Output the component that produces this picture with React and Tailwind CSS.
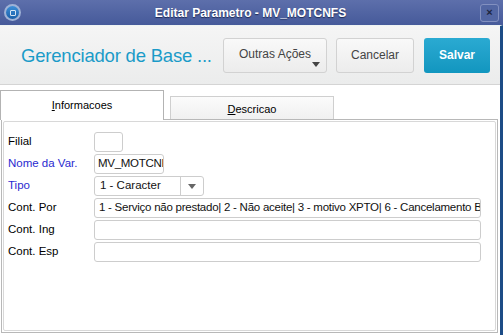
export default function App() {
  const rows = [
    { label: "Filial", blue: false, w: "w-[29px]", value: "" },
    { label: "Nome da Var.", blue: true, w: "w-[70px]", value: "MV_MOTCNF" },
  ];
  const longRows = [
    {
      label: "Cont. Por",
      value:
        "1 - Serviço não prestado| 2 - Não aceite| 3 - motivo XPTO| 6 - Cancelamento Ba",
    },
    { label: "Cont. Ing", value: "" },
    { label: "Cont. Esp", value: "" },
  ];

  return (
    <div className="w-[503px] h-[335px] flex flex-col bg-white overflow-hidden font-['Liberation_Sans',Arial,sans-serif]">
      {/* title bar */}
      <div className="h-[25px] shrink-0 flex items-center px-[4px] bg-gradient-to-b from-[#5d6fab] to-[#465a9a]">
        <div className="w-[17px] h-[17px] rounded-full bg-[#9fb2d6] p-[2px]">
          <div className="w-full h-full rounded-full bg-gradient-to-b from-[#3d8fd8] to-[#1a5fa8] flex items-center justify-center">
            <div className="w-[6px] h-[6px] border border-white/80 rounded-[1px]"></div>
          </div>
        </div>
        <div className="flex-1 text-center text-white font-bold text-[12px] [text-shadow:0_1px_1px_#1d2a55]">
          Editar Parametro - MV_MOTCNFS
        </div>
        <div className="w-[19px] h-[18px] border border-[#8290c0] rounded-[3px] bg-[#5266a3] flex items-center justify-center text-[#1c2540] text-[11px] font-bold leading-none">
          ×
        </div>
      </div>

      <div className="flex-1 flex flex-col border-r-[3px] border-[#1c4c86] border-t border-t-[#eef3f3]">
        {/* header */}
        <div className="h-[59px] shrink-0 flex items-center bg-gradient-to-b from-[#f5f5f5] to-[#ebecec] border-b border-[#d4d4d4] pl-[21px] pr-[10px]">
          <div className="flex-1 text-[18.5px] text-[#1a9bc8] tracking-[-0.2px] pt-[2px]">
            Gerenciador de Base ...
          </div>
          <div className="flex items-center gap-[9px]">
            <button className="relative w-[104px] h-[35px] border border-[#d2d2d2] rounded-[3px] bg-gradient-to-b from-[#f9f9f9] to-[#ececec] text-[12px] text-[#444] pb-[3px]">
              Outras Ações
              <span className="absolute right-[6px] bottom-[5px] w-0 h-0 border-l-[4px] border-r-[4px] border-t-[5px] border-l-transparent border-r-transparent border-t-[#444]"></span>
            </button>
            <button className="w-[78px] h-[35px] border border-[#d2d2d2] rounded-[3px] bg-gradient-to-b from-[#f9f9f9] to-[#ececec] text-[12px] text-[#444]">
              Cancelar
            </button>
            <button className="w-[66px] h-[35px] rounded-[3px] bg-gradient-to-b from-[#2aaad2] to-[#1196bf] text-[12px] font-bold text-white ml-[1px]">
              Salvar
            </button>
          </div>
        </div>

        {/* tabs */}
        <div className="flex items-end h-[34px] shrink-0 pt-[5px] text-[11px] text-black">
          <div className="w-[164px] h-[30px] border border-b-0 border-[#b3b3b3] bg-white flex items-start justify-center pt-[6px] relative z-10 -mb-[1px]">
            <span>
              <span className="underline">I</span>nformacoes
            </span>
          </div>
          <div className="w-[164px] h-[23px] ml-[6px] border border-b-0 border-[#cfcfcf] bg-gradient-to-b from-[#fbfbfb] to-[#f0f0f0] flex items-center justify-center pt-[2px]">
            <span>
              <span className="underline">D</span>escricao
            </span>
          </div>
        </div>

        {/* panel */}
        <div className="flex-1 ml-[1px] mr-[2px] mb-[2px] border border-[#b8b8b8] p-[1px]">
          <div className="h-full border border-[#d8d8d8] rounded-[2px] bg-white pt-[10px] pl-[4px] pr-[14px] flex flex-col gap-[2px] text-[11.5px]">
            {rows.map((r) => (
              <div key={r.label} className="flex items-center h-[20px]">
                <div className={"w-[86px] " + (r.blue ? "text-[#2a2ad0]" : "text-black")}>
                  {r.label}
                </div>
                <div className={r.w + " h-[20px] border border-[#cdcdcd] rounded-[3px] pl-[3px] flex items-center overflow-hidden whitespace-nowrap text-[#111] text-[11.5px] tracking-[-0.3px]"}>
                  {r.value}
                </div>
              </div>
            ))}
            <div className="flex items-center h-[20px]">
              <div className="w-[86px] text-[#2a2ad0]">Tipo</div>
              <div className="w-[110px] h-[20px] border border-[#cdcdcd] rounded-[3px] flex items-center text-[#111] text-[11.5px]">
                <div className="flex-1 px-[5px]">1 - Caracter</div>
                <div className="w-[23px] h-full border-l border-[#cdcdcd] flex items-center justify-center">
                  <span className="w-0 h-0 border-l-[4px] border-r-[4px] border-t-[5px] border-l-transparent border-r-transparent border-t-[#666]"></span>
                </div>
              </div>
            </div>
            {longRows.map((r) => (
              <div key={r.label} className="flex items-center h-[20px]">
                <div className="w-[86px] text-black">{r.label}</div>
                <div className="flex-1 h-[20px] border border-[#cdcdcd] rounded-[3px] pl-[4px] flex items-center overflow-hidden whitespace-nowrap text-[#111] text-[11.5px] tracking-[-0.25px]">
                  {r.value}
                </div>
              </div>
            ))}
          </div>
        </div>
      </div>
    </div>
  );
}
